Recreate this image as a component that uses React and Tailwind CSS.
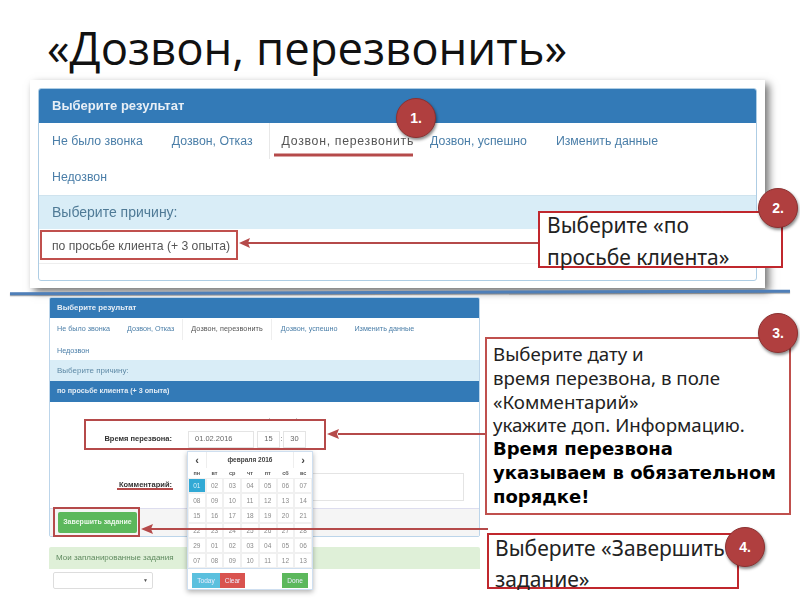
const sans = "font-['Liberation_Sans',sans-serif]";

function Badge({ n, className }) {
  return (
    <div className={`absolute w-[40px] h-[40px] rounded-full bg-[#b03f3f] border border-[#8c3131] shadow-[1px_2px_3px_rgba(0,0,0,0.45)] flex items-center justify-center text-white text-[14px] font-bold font-['Liberation_Sans',sans-serif] ${className}`}>
      {n}
    </div>
  );
}

function Calendar() {
  const days = ["01","02","03","04","05","06","07","08","09","10","11","12","13","14","15","16","17","18","19","20","21","22","23","24","25","26","27","28","29","01","02","03","04","05","06","07","08","09","10","11","12","13"];
  return (
    <div className="absolute left-[187px] top-[451px] w-[126px] h-[139px] bg-white border border-[#cfdff0] shadow-[0_2px_5px_rgba(0,0,0,0.3)] text-[6.5px] text-[#8a8a8a] flex flex-col blur-[0.4px]">
      <div className="flex h-[16px] text-[#444]">
        <div className="w-[18px] flex items-center justify-center text-[11px] font-bold">‹</div>
        <div className="flex-1 flex items-center justify-center text-[6.5px] font-bold border-x border-[#eee]">февраля 2016</div>
        <div className="w-[18px] flex items-center justify-center text-[11px] font-bold">›</div>
      </div>
      <div className="grid grid-cols-7 h-[10px] items-center text-center font-bold text-[5.5px] text-[#555]">
        {["пн","вт","ср","чт","пт","сб","вс"].map((d) => <div key={d}>{d}</div>)}
      </div>
      <div className="grid grid-cols-7 auto-rows-[15px] border-b border-[#cfdff0]">
        {days.map((d, i) => (
          <div key={i} className={`flex items-center justify-center border border-[#f0f0f0] ${i === 0 ? "bg-[#31a9d5] text-[#d9f1fa]" : ""}`}>{d}</div>
        ))}
      </div>
      <div className="flex mt-[4px] mx-[4px] h-[15px] text-[6.5px] text-[#eef]">
        <div className="w-[28px] bg-[#5bc0de] flex items-center justify-center">Today</div>
        <div className="w-[25px] bg-[#d9534f] flex items-center justify-center">Clear</div>
        <div className="w-[26px] ml-auto bg-[#5cb85c] flex items-center justify-center">Done</div>
      </div>
    </div>
  );
}

export default function App() {
  return (
    <div className={`relative w-[800px] h-[600px] overflow-hidden bg-white ${sans}`}>
      <div className="h-[80px] pl-[47px] pt-[21px] text-[45.5px] leading-[52px] text-[#111] font-['Open_Sans',sans-serif]">
        «Дозвон, перезвонить»
      </div>

      {/* first screenshot */}
      <div className="ml-[30px] w-[735px] h-[208px] bg-white shadow-[4px_4px_8px_rgba(0,0,0,0.55)] p-[8px] blur-[0.4px]">
        <div className="h-[193px] border border-[#aecde4] rounded-[3px] overflow-hidden flex flex-col">
          <div className="h-[34px] shrink-0 bg-[#337ab7] text-[#e8eff6] text-[13px] font-bold flex items-center pl-[13px]">Выберите результат</div>
          <div className="flex h-[36px] shrink-0 items-center text-[12.3px] text-[#4a7ea8] pl-[13px]">
            <span>Не было звонка</span>
            <span className="ml-[29px]">Дозвон, Отказ</span>
            <span className="ml-[16px] h-full flex items-center pl-[12px] border-l border-[#e8e8e8] text-[#555] tracking-[0.7px]">Дозвон, перезвонить</span>
            <span className="ml-[16px]">Дозвон, успешно</span>
            <span className="ml-[29px]">Изменить данные</span>
          </div>
          <div className="h-[36px] shrink-0 flex items-center text-[12.3px] text-[#4a7ea8] pl-[13px]">Недозвон</div>
          <div className="h-[34px] shrink-0 bg-[#d9edf7] border-t border-[#cfe3ee] flex items-center pl-[13px] text-[14px] text-[#4f7a96]">Выберите причину:</div>
          <div className="h-[35px] shrink-0 border-b border-[#eee] flex items-center pl-[13px] text-[12.2px] text-[#555]">по просьбе клиента (+ 3 опыта)</div>
        </div>
      </div>

      {/* divider */}
      <div className="mt-[3px] ml-[10px] w-[780px] h-[3px] bg-[#4f7fb8] shadow-[0_1px_1px_rgba(0,0,0,0.35)] -rotate-[0.2deg]"></div>

      {/* second screenshot */}
      <div className="mt-[3px] ml-[49px] w-[431px] h-[292px] flex flex-col blur-[0.5px]">
        <div className="h-[240px] shrink-0 border border-[#bcd5ea] rounded-[2px] flex flex-col overflow-hidden">
          <div className="h-[20px] shrink-0 bg-[#337ab7] text-[#e8eff6] text-[7.8px] font-bold flex items-center pl-[7px]">Выберите результат</div>
          <div className="flex h-[22px] shrink-0 items-center text-[7.2px] text-[#4a7ea8] pl-[7px] pt-[1px]">
            <span>Не было звонка</span>
            <span className="ml-[17px]">Дозвон, Отказ</span>
            <span className="ml-[8px] h-full flex items-center pl-[8px] pr-[8px] border-x border-[#eee] text-[#555] tracking-[0.1px]">Дозвон, перезвонить</span>
            <span className="ml-[9px]">Дозвон, успешно</span>
            <span className="ml-[17px]">Изменить данные</span>
          </div>
          <div className="h-[20px] shrink-0 flex items-center text-[7.2px] text-[#4a7ea8] pl-[7px] pt-[2px]">Недозвон</div>
          <div className="h-[21px] shrink-0 bg-[#d9edf7] flex items-center pl-[7px] text-[8px] text-[#5f8aa6]">Выберите причину:</div>
          <div className="h-[21px] shrink-0 bg-[#337ab7] flex items-center pl-[7px] text-[7.2px] text-[#e4edf5] font-bold">по просьбе клиента (+ 3 опыта)</div>
          <div className="h-[106px] shrink-0 relative text-[7.5px]">
            <div className="absolute left-[217px] top-[15px] text-[6px] text-[#666]">⌃</div>
            <div className="absolute left-[244px] top-[15px] text-[6px] text-[#666]">⌃</div>
            <div className="flex items-center pt-[28px] h-[46px]">
              <div className="w-[122px] text-right font-bold text-[#333]">Время перезвона:</div>
              <div className="ml-[16px] w-[66px] h-[17px] border border-[#e4e4e4] flex items-center pl-[6px] text-[#666]">01.02.2016</div>
              <div className="ml-[3px] w-[23px] h-[17px] border border-[#e4e4e4] flex items-center justify-center text-[#666]">15</div>
              <div className="w-[3px] text-center text-[#666]">:</div>
              <div className="w-[23px] h-[17px] border border-[#e4e4e4] flex items-center justify-center text-[#666]">30</div>
            </div>
            <div className="flex items-start mt-[25px]">
              <div className="w-[122px] text-right font-bold text-[#333] pt-[6px]">Комментарий:</div>
              <div className="ml-[16px] w-[276px] h-[28px] border border-[#e4e4e4]"></div>
            </div>
          </div>
          <div className="flex-1 bg-[#f5f5f5] border-t border-[#dde] flex items-center pl-[8px]">
            <div className="w-[79px] h-[21px] rounded-[2px] bg-[#5cb85c] text-[#eaf7ea] text-[7px] font-bold flex items-center justify-center">Завершить задание</div>
          </div>
        </div>
        <div className="mt-[10px] h-[22px] shrink-0 bg-[#dff0d8] flex items-center pl-[7px] text-[8px] text-[#5f8a5f] rounded-t-[2px]">Мои запланированные задания</div>
        <div className="ml-[4px] mt-[3px] w-[100px] h-[17px] border border-[#ddd] rounded-[2px] flex items-center justify-end pr-[4px] text-[5px] text-[#555]">▼</div>
      </div>

      <Calendar />

      {/* annotation arrows */}
      <svg className="absolute left-0 top-0" width="800" height="600" viewBox="0 0 800 600">
        <g stroke="#b54a4a" strokeWidth="2" fill="none">
          <line x1="274" y1="155" x2="413" y2="155" strokeWidth="3" />
          <rect x="41" y="231" width="196" height="28" stroke="#c0504d" />
          <line x1="248" y1="243" x2="540" y2="243" />
          <rect x="85" y="420" width="240" height="29" />
          <line x1="338" y1="434" x2="486" y2="434" />
          <line x1="117" y1="489" x2="173" y2="489" strokeWidth="2" />
          <rect x="54" y="508" width="85" height="28" />
          <line x1="150" y1="529" x2="488" y2="529" />
        </g>
        <g fill="#b54a4a">
          <polygon points="239,243 250,238 248,243 250,248" />
          <polygon points="327,434 339,429 337,434 339,439" />
          <polygon points="141,529 153,524 151,529 153,534" />
        </g>
      </svg>

      {/* callouts */}
      <div className="absolute left-[538px] top-[211px] w-[245px] h-[57px] bg-white border-2 border-[#c0272d] pl-[7px] text-[21px] leading-[32px] text-[#222] font-['Noto_Sans',sans-serif]">
        <div className="-mt-[4px]">Выберите «по<br />просьбе клиента»</div>
      </div>
      <div className="absolute left-[485px] top-[337px] w-[306px] h-[178px] bg-white border-2 border-[#c0504d] pl-[6px] pt-[3px] text-[18.7px] leading-[23.8px] text-[#222] font-['Noto_Sans',sans-serif]">
        Выберите дату и<br />время перезвона, в поле<br />«Комментарий»<br />укажите доп. Информацию.
        <div className="font-['DejaVu_Sans',sans-serif] text-[18px] font-bold text-black">Время перезвона<br />указываем в обязательном<br />порядке!</div>
      </div>
      <div className="absolute left-[487px] top-[533px] w-[252px] h-[56px] bg-white border-2 border-[#c0272d] pl-[6px] text-[21px] leading-[31px] text-[#222] font-['Noto_Sans',sans-serif]">
        <div className="-mt-[2px]">Выберите «Завершить<br />задание»</div>
      </div>
      <Badge n="1." className="left-[396px] top-[98px]" />
      <Badge n="2." className="left-[758px] top-[188px]" />
      <Badge n="3." className="left-[758px] top-[313px]" />
      <Badge n="4." className="left-[725px] top-[527px]" />
    </div>
  );
}
